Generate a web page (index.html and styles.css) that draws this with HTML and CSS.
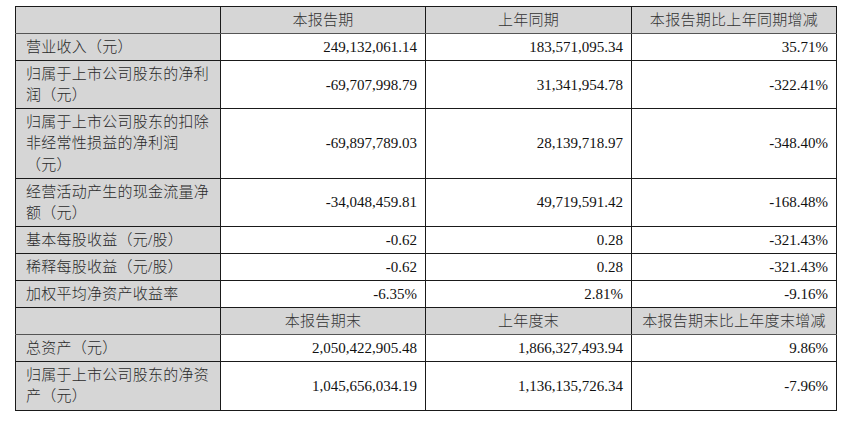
FILE: index.html
```html
<!DOCTYPE html>
<html lang="zh">
<head>
<meta charset="utf-8">
<title>主要会计数据</title>
<link rel="stylesheet" href="styles.css">
</head>
<body>
<div class="page">
<table class="fin">
  <colgroup>
    <col class="c1"><col class="c2"><col class="c3"><col class="c4">
  </colgroup>
  <tr class="head">
    <th class="label"></th>
    <th>本报告期</th>
    <th>上年同期</th>
    <th>本报告期比上年同期增减</th>
  </tr>
  <tr>
    <td class="label">营业收入（元）</td>
    <td>249,132,061.14</td>
    <td>183,571,095.34</td>
    <td>35.71%</td>
  </tr>
  <tr>
    <td class="label">归属于上市公司股东的净利润（元）</td>
    <td>-69,707,998.79</td>
    <td>31,341,954.78</td>
    <td>-322.41%</td>
  </tr>
  <tr>
    <td class="label">归属于上市公司股东的扣除非经常性损益的净利润（元）</td>
    <td>-69,897,789.03</td>
    <td>28,139,718.97</td>
    <td>-348.40%</td>
  </tr>
  <tr>
    <td class="label">经营活动产生的现金流量净额（元）</td>
    <td>-34,048,459.81</td>
    <td>49,719,591.42</td>
    <td>-168.48%</td>
  </tr>
  <tr>
    <td class="label">基本每股收益（元/股）</td>
    <td>-0.62</td>
    <td>0.28</td>
    <td>-321.43%</td>
  </tr>
  <tr>
    <td class="label">稀释每股收益（元/股）</td>
    <td>-0.62</td>
    <td>0.28</td>
    <td>-321.43%</td>
  </tr>
  <tr>
    <td class="label">加权平均净资产收益率</td>
    <td>-6.35%</td>
    <td>2.81%</td>
    <td>-9.16%</td>
  </tr>
  <tr class="head">
    <th class="label"></th>
    <th>本报告期末</th>
    <th>上年度末</th>
    <th>本报告期末比上年度末增减</th>
  </tr>
  <tr>
    <td class="label">总资产（元）</td>
    <td>2,050,422,905.48</td>
    <td>1,866,327,493.94</td>
    <td>9.86%</td>
  </tr>
  <tr>
    <td class="label">归属于上市公司股东的净资产（元）</td>
    <td>1,045,656,034.19</td>
    <td>1,136,135,726.34</td>
    <td>-7.96%</td>
  </tr>
</table>
</div>
</body>
</html>
```

FILE: styles.css
```css
html, body {
  margin: 0;
  padding: 0;
  background: #ffffff;
}

.page {
  padding: 6px 0 0 15px;
}

.fin {
  border-collapse: collapse;
  table-layout: fixed;
  width: 821px;
  font-family: "Liberation Serif", "Noto Sans CJK SC", serif;
  font-size: 15px;
  line-height: 21.1px;
  color: #111;
}

.c1 { width: 205px; }
.c2 { width: 205px; }
.c3 { width: 206px; }
.c4 { width: 205px; }

.fin th,
.fin td {
  border: 1px solid #1a1a1a;
  padding: 3px 8px 2px 8px;
  vertical-align: middle;
}

.fin td {
  text-align: right;
}

.fin th {
  font-weight: 300;
  text-align: center;
  background: #d6d6d6;
  color: #333;
  letter-spacing: 0.3px;
}

.fin .label {
  text-align: left;
  background: #d6d6d6;
  padding-left: 10px;
  padding-right: 5px;
  letter-spacing: 0.25px;
  font-weight: 300;
  color: #2a2a2a;
}

.fin .head th {
  border-bottom-color: #555;
}
```
